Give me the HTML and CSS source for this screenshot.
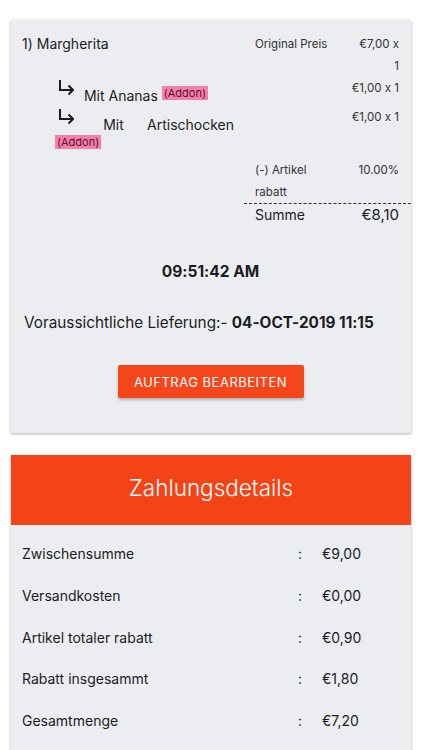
FILE: index.html
```html
<!DOCTYPE html>
<html lang="de">
<head>
    <meta charset="UTF-8">
    <meta name="viewport" content="width=device-width, initial-scale=1.0">
    <title>Bestellung</title>
    <link rel="stylesheet" href="styles.css">
</head>
<body>
    <div class="card order">
        <div class="row">
            <div class="name">1) Margherita</div>
            <div class="label">Original Preis</div>
            <div class="value">€7,00 x<br>1</div>
        </div>
        <div class="row">
            <div class="name sub">
                <svg class="arrow" viewBox="0 0 16 16"><path d="M2 0 V10 H15 M10.5 5.5 L15 10 L10.5 14.5"/></svg>
                Mit Ananas <span class="addon">(Addon)</span>
            </div>
            <div class="label"></div>
            <div class="value">€1,00 x 1</div>
        </div>
        <div class="row">
            <div class="name sub">
                <svg class="arrow" viewBox="0 0 16 16"><path d="M2 0 V10 H15 M10.5 5.5 L15 10 L10.5 14.5"/></svg>
                Mit Artischocken <span class="addon">(Addon)</span>
            </div>
            <div class="label"></div>
            <div class="value">€1,00 x 1</div>
        </div>
        <div class="row discount">
            <div class="name"></div>
            <div class="label">(-) Artikel rabatt</div>
            <div class="value">10.00%</div>
        </div>
        <div class="sum">
            <span>Summe</span>
            <span class="sum-value">€8,10</span>
        </div>

        <div class="time">09:51:42 AM</div>
        <div class="delivery">Voraussichtliche Lieferung:- <b>04-OCT-2019 11:15</b></div>
        <div class="actions">
            <button class="btn">AUFTRAG BEARBEITEN</button>
        </div>
    </div>

    <div class="card payment">
        <div class="pay-head">Zahlungsdetails</div>
        <div class="pay-body">
            <div class="pay-row"><span>Zwischensumme</span><span class="colon">:</span><span>€9,00</span></div>
            <div class="pay-row"><span>Versandkosten</span><span class="colon">:</span><span>€0,00</span></div>
            <div class="pay-row"><span>Artikel totaler rabatt</span><span class="colon">:</span><span>€0,90</span></div>
            <div class="pay-row"><span>Rabatt insgesammt</span><span class="colon">:</span><span>€1,80</span></div>
            <div class="pay-row"><span>Gesamtmenge</span><span class="colon">:</span><span>€7,20</span></div>
        </div>
    </div>
</body>
</html>
```

FILE: styles.css
```css
body {
    font-family: 'Inter', 'Liberation Sans', sans-serif;
    font-feature-settings: "calt" 0;
    background-color: #ffffff;
    color: #1c1c1e;
    margin: 0;
    padding: 20px 11px 0;
}
.card {
    background: #ebedf0;
    box-shadow: 0 1px 3px rgba(0, 0, 0, 0.3);
}
.order {
    padding: 13px 12px 35px 11px;
}
.row {
    display: grid;
    grid-template-columns: 1fr 84px 60px;
    align-items: start;
}
.name {
    font-size: 14px;
    line-height: 22px;
    padding-right: 21px;
}
.name.sub {
    padding-left: 33px;
    padding-top: 3px;
    line-height: 20px;
    text-align: justify;
}
.arrow {
    width: 16px;
    height: 16px;
    vertical-align: 5px;
    margin-left: 3px;
    margin-right: 6px;
    fill: none;
    stroke: #1c1c1e;
    stroke-width: 2;
}
.addon {
    font-size: 11px;
    line-height: 13px;
    background: #f47fa8;
    color: #5c1030;
    padding: 0 2px;
    vertical-align: 4px;
}
.label, .value {
    font-size: 11.5px;
    line-height: 22px;
    color: #333;
}
.value {
    text-align: right;
}
.discount {
    margin-top: 4px;
}
.sum {
    display: flex;
    justify-content: space-between;
    margin-left: 222px;
    margin-right: -12px;
    padding: 0 12px 0 11px;
    border-top: 1px dashed #333;
    font-size: 14px;
    line-height: 22px;
}
.sum-value {
    font-size: 15px;
}
.time {
    text-align: center;
    font-weight: 700;
    font-size: 15.5px;
    line-height: 20px;
    margin-top: 36px;
}
.delivery {
    font-size: 15.3px;
    line-height: 20px;
    margin-top: 31px;
    padding-left: 2px;
}
.delivery b {
    font-weight: 700;
}
.actions {
    text-align: center;
    margin-top: 32px;
}
.btn {
    font-family: inherit;
    height: 33px;
    width: 186px;
    background-color: #f4461a;
    color: white;
    border: none;
    border-radius: 2px;
    font-size: 13px;
    letter-spacing: 0.5px;
    box-shadow: 0 2px 3px rgba(0, 0, 0, 0.25);
    cursor: pointer;
}
.payment {
    margin-top: 22px;
    padding-bottom: 30px;
}
.pay-head {
    background-color: #f44316;
    color: white;
    height: 70px;
    padding-bottom: 6px;
    box-sizing: border-box;
    display: flex;
    align-items: center;
    justify-content: center;
    font-size: 22.5px;
    font-weight: 300;
}
.pay-body {
    padding-top: 8px;
}
.pay-row {
    display: grid;
    grid-template-columns: 1fr 24px 89px;
    column-gap: 10px;
    padding-left: 11px;
    font-size: 14px;
    line-height: 41.75px;
}
.colon {
    text-align: center;
}
```
